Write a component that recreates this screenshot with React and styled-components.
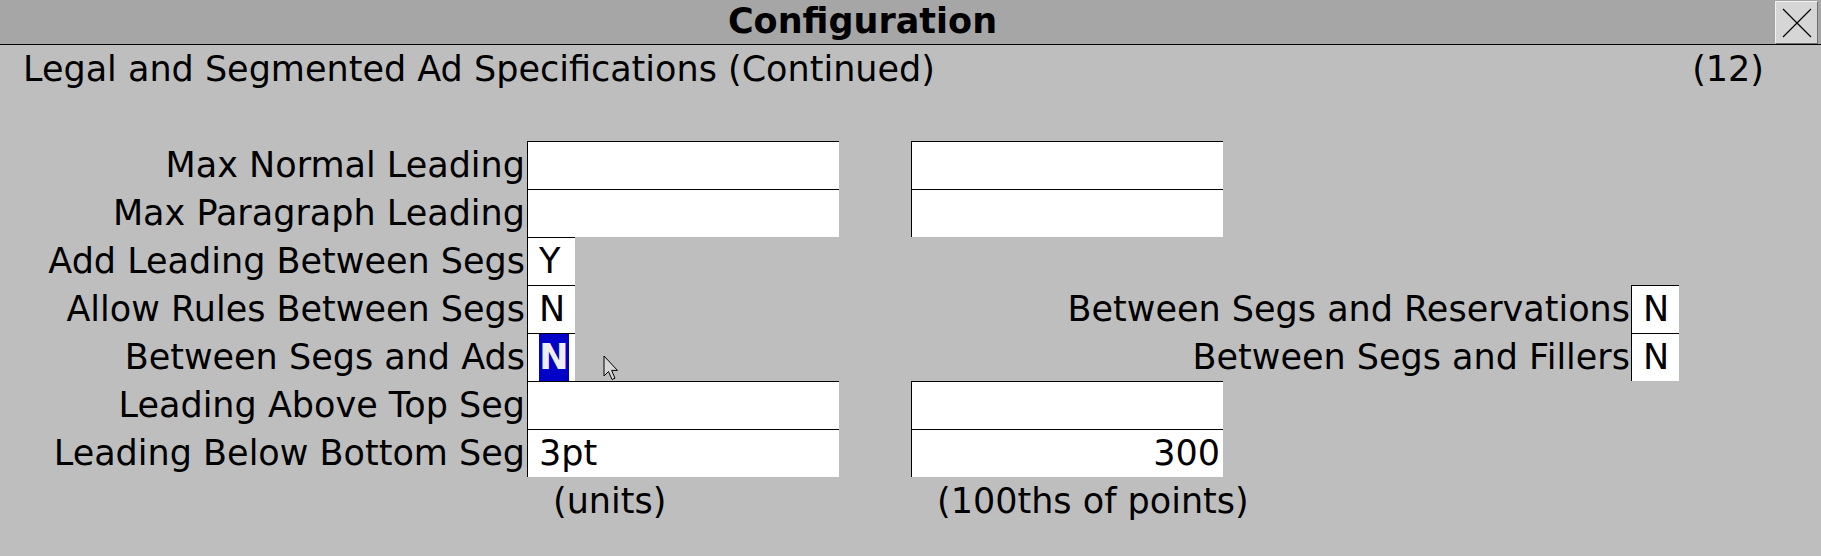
import React from 'react';
import styled, { createGlobalStyle } from 'styled-components';

const GlobalStyle = createGlobalStyle`
  html, body {
    margin: 0;
    padding: 0;
    background: #bebebe;
  }
  body {
    font-family: "DejaVu Sans", "Liberation Sans", sans-serif;
    color: #000;
  }
`;

const rows = [
  { label: 'Max Normal Leading', units: '', points: '' },
  { label: 'Max Paragraph Leading', units: '', points: '' },
  { label: 'Add Leading Between Segs', flag: 'Y' },
  { label: 'Allow Rules Between Segs', flag: 'N', right: { label: 'Between Segs and Reservations', flag: 'N' } },
  { label: 'Between Segs and Ads', flag: 'N', selected: true, right: { label: 'Between Segs and Fillers', flag: 'N' } },
  { label: 'Leading Above Top Seg', units: '', points: '' },
  { label: 'Leading Below Bottom Seg', units: '3pt', points: '300' },
];

const App = () => {
  return (
    <>
      <GlobalStyle />
      <Window>
        <TitleBar>
          <Title>Configuration</Title>
          <CloseButton aria-label="Close">
            <svg width="30" height="30" viewBox="0 0 30 30">
              <path d="M1 1 L29 29 M29 1 L1 29" stroke="#000" strokeWidth="1.2" fill="none" />
            </svg>
          </CloseButton>
        </TitleBar>

        <SubHeader>
          <span>Legal and Segmented Ad Specifications (Continued)</span>
          <span>(12)</span>
        </SubHeader>

        <Form>
          {rows.map((row) => (
            <React.Fragment key={row.label}>
              <Label>{row.label}</Label>
              {row.flag !== undefined ? (
                <>
                  <Field $narrow>
                    {row.selected ? <Selected>{row.flag}</Selected> : row.flag}
                  </Field>
                  {row.right ? (
                    <>
                      <RightLabel>{row.right.label}</RightLabel>
                      <Field $narrow>{row.right.flag}</Field>
                    </>
                  ) : (
                    <Filler />
                  )}
                </>
              ) : (
                <>
                  <Field>{row.units}</Field>
                  <Gap />
                  <Field $align="right">{row.points}</Field>
                  <Filler $span={2} />
                </>
              )}
            </React.Fragment>
          ))}
          <Blank />
          <Caption>(units)</Caption>
          <Gap />
          <Caption>(100ths of points)</Caption>
        </Form>

        <Cursor width="16" height="26" viewBox="0 0 16 26">
          <path
            d="M1 1 L1 21 L5.5 16.5 L9 24.5 L12 23.2 L8.6 15.4 L14.5 15.4 Z"
            fill="#d8d8d8"
            stroke="#000"
            strokeWidth="1"
          />
        </Cursor>
      </Window>
    </>
  );
};

export default App;

const Window = styled.div`
  position: relative;
  width: 1821px;
  height: 556px;
  background: #bebebe;
  overflow: hidden;
  font-size: 35px;
`;

const TitleBar = styled.div`
  display: flex;
  height: 44px;
  background: #a6a6a6;
  border-bottom: 1px solid #000;
`;

const Title = styled.div`
  flex: 1;
  text-align: center;
  font-weight: bold;
  font-size: 35px;
  line-height: 42px;
  padding-right: 50px;
`;

const CloseButton = styled.div`
  box-sizing: border-box;
  width: 43px;
  height: 43px;
  margin: 1px 3px 0 0;
  display: flex;
  align-items: center;
  justify-content: center;
  background: #d6d6d6;
  border: 1px solid;
  border-color: #f2f2f2 #6e6e6e #6e6e6e #f2f2f2;
`;

const SubHeader = styled.div`
  display: flex;
  justify-content: space-between;
  align-items: center;
  height: 48px;
  padding: 0 57px 0 23px;
  line-height: 48px;
`;

const Form = styled.div`
  display: grid;
  grid-template-columns: 527px 312px 72px 312px 408px 48px;
  grid-auto-rows: 48px;
  margin-top: 48px;
`;

const Label = styled.div`
  text-align: right;
  padding-right: 2px;
  line-height: 48px;
  white-space: nowrap;
`;

const RightLabel = styled(Label)`
  grid-column: 3 / 6;
  padding-right: 1px;
`;

const Field = styled.div`
  box-sizing: border-box;
  width: ${(p) => (p.$narrow ? '48px' : '312px')};
  height: 48px;
  background: #fff;
  border-top: 1px solid #000;
  border-left: 1px solid #000;
  padding: 0 3px 0 11px;
  line-height: 47px;
  text-align: ${(p) => p.$align || 'left'};
  white-space: nowrap;
`;

const Selected = styled.span`
  display: inline-block;
  width: 30px;
  height: 47px;
  background: #0000c8;
  color: #eeeeee;
  font-weight: bold;
  text-align: center;
  vertical-align: top;
`;

const Gap = styled.div``;

const Filler = styled.div`
  grid-column: span ${(p) => p.$span || 4};
`;

const Blank = styled.div``;

const Caption = styled.div`
  padding-left: 26px;
  line-height: 48px;
  white-space: nowrap;
`;

const Cursor = styled.svg`
  position: absolute;
  left: 603px;
  top: 355px;
`;
